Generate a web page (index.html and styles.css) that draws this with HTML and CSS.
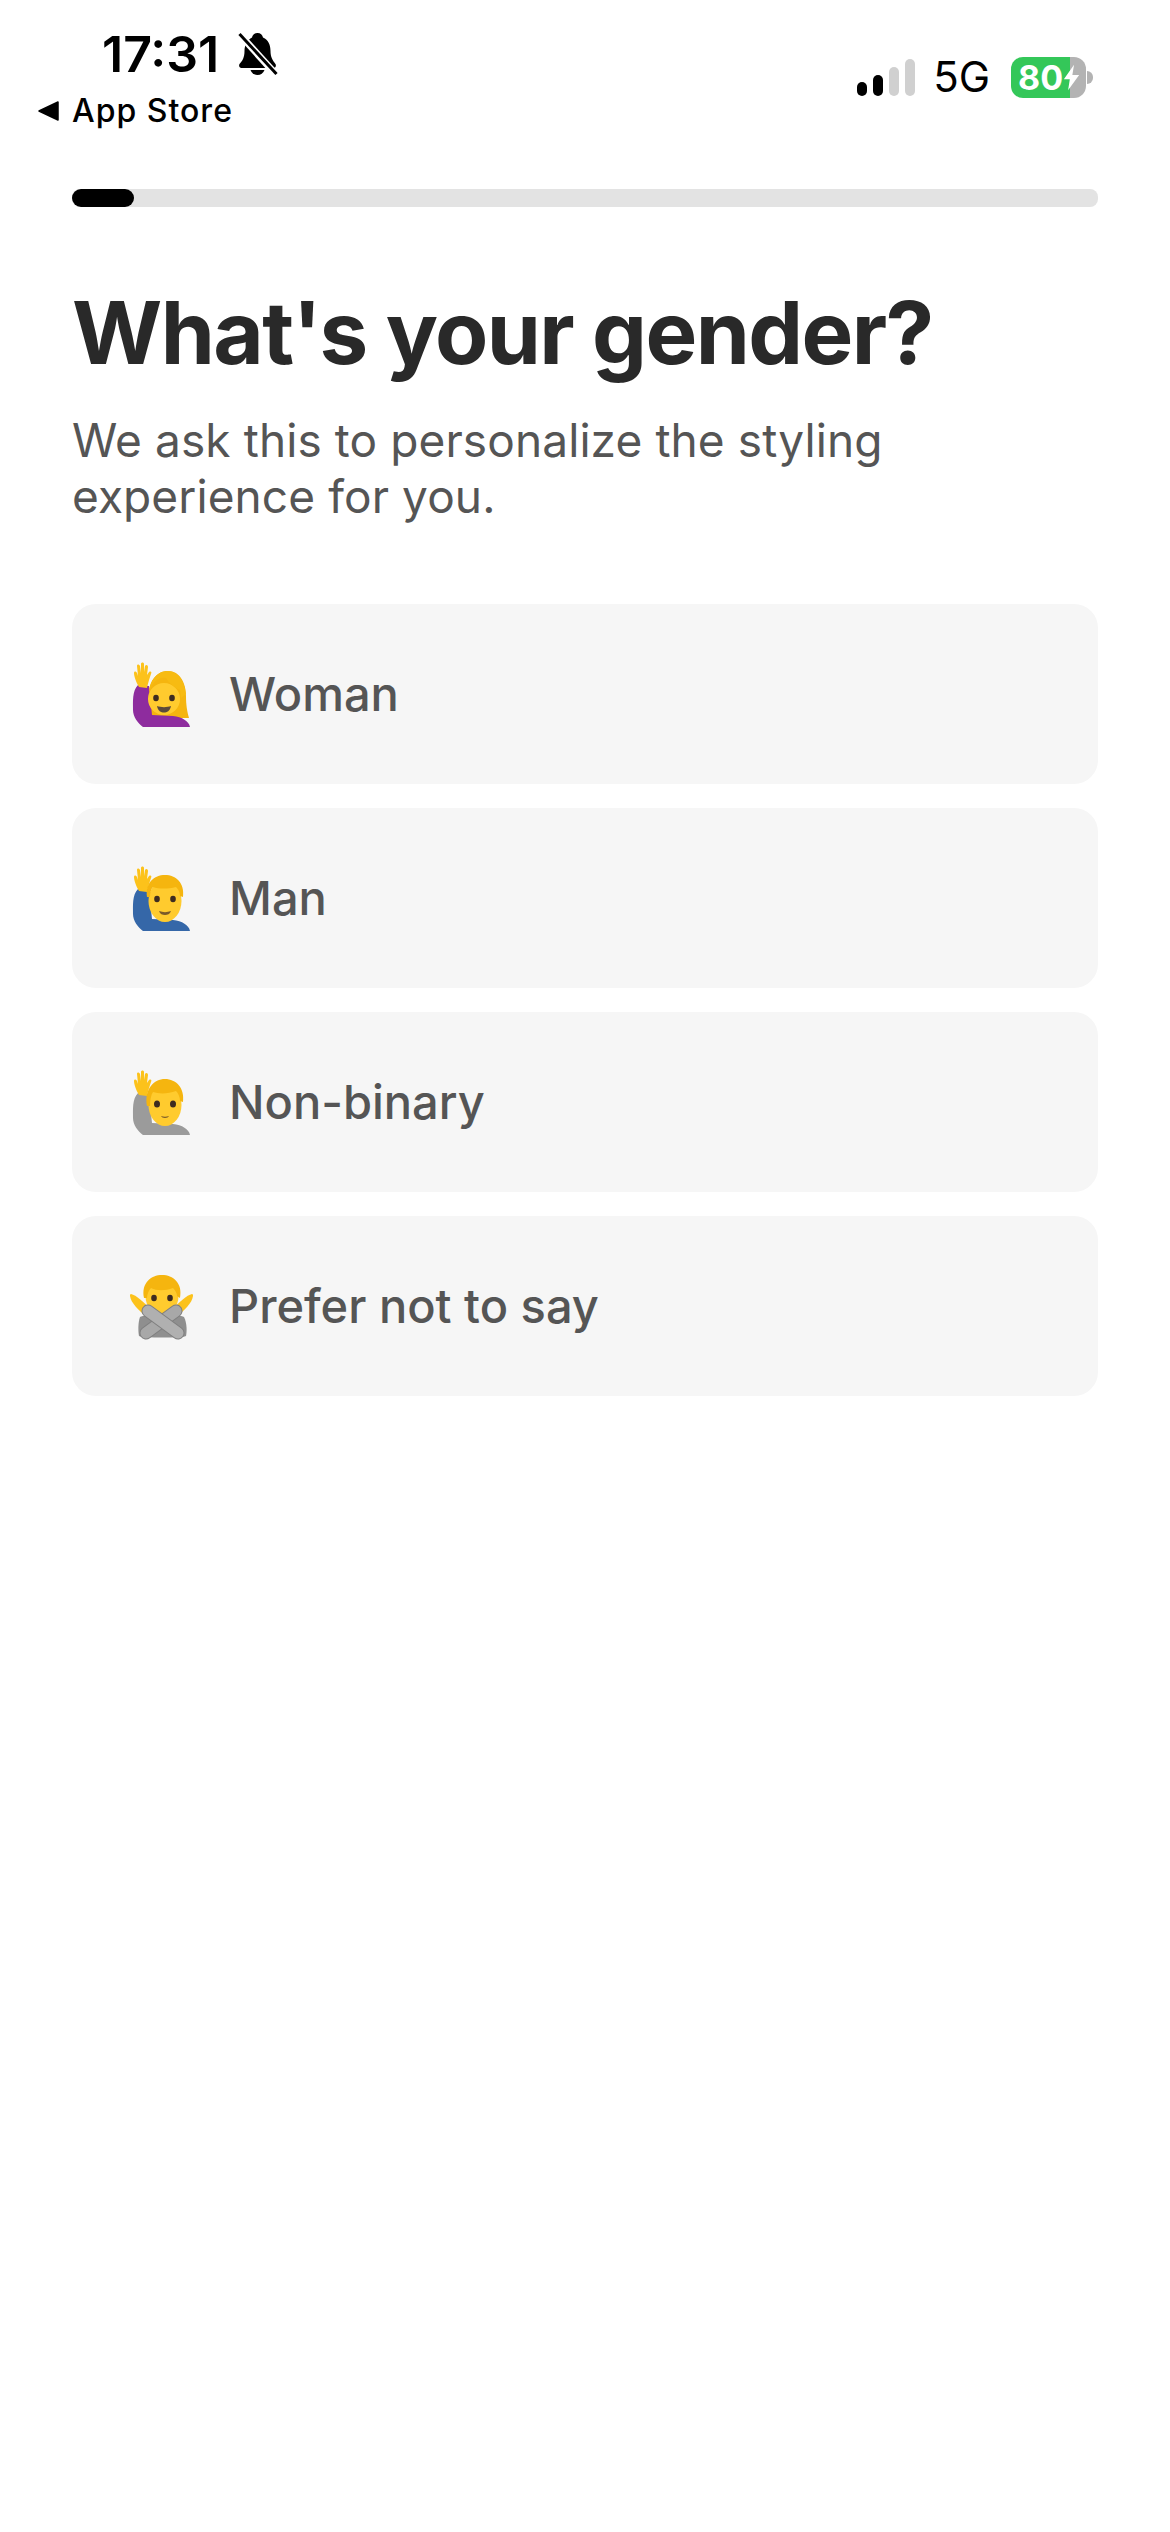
FILE: index.html
```html
<!DOCTYPE html>
<html lang="en">
<head>
  <meta charset="UTF-8">
  <meta name="viewport" content="width=device-width, initial-scale=1.0">
  <title>What's your gender?</title>
  <link rel="stylesheet" href="styles.css">
</head>
<body>

  <!-- Status bar -->
  <header class="status-bar">
    <div class="status-left">
      <div class="clock">
        <span class="time">17:31</span>
        <svg class="bell" viewBox="0 0 40 44">
          <path d="M20 1c3 0 5 2 5.500 4.500C31 8 33 13 33 19c0 6 2 9 5 13 1 2 0 4-2 4H4c-2 0-3-2-2-4 3-3 5-7 5-13 0-6 3-11 7.500-13.500C15 3 17 1 20 1z" fill="#000"/>
          <path d="M13 38h14c-1 3-4 5-7 5s-6-2-7-5z" fill="#000"/>
          <path d="M1 1l37 41" stroke="#fff" stroke-width="7"/>
          <path d="M2 2l37 40" stroke="#000" stroke-width="3"/>
        </svg>
      </div>
      <div class="back-link">
        <svg class="back-arrow" viewBox="0 0 22 20"><path d="M1 10L20 1v18z" fill="#000" stroke="#000" stroke-width="1.500" stroke-linejoin="round"/></svg>
        <span>App Store</span>
      </div>
    </div>
    <div class="status-right">
      <div class="signal">
        <span class="bar bar-1"></span>
        <span class="bar bar-2"></span>
        <span class="bar bar-3"></span>
        <span class="bar bar-4"></span>
      </div>
      <span class="network">5G</span>
      <div class="battery">
        <span class="battery-level">80</span>
        <svg class="bolt" viewBox="0 0 20 30"><path d="M13 0L1 17h7l-2 13L19 12h-8z" fill="#fff"/></svg>
        <span class="battery-tip"></span>
      </div>
    </div>
  </header>

  <main class="content">
    <div class="progress"><div class="progress-fill"></div></div>

    <h1>What's your gender?</h1>
    <p class="subtitle">We ask this to personalize the styling<br>experience for you.</p>

    <!-- Options -->
    <div class="options">
      <div class="option">
        <svg class="emoji" viewBox="0 0 64 68">
          <path d="M19 40C17 21 27 11 38 11c12 0 18 12 18 25 0 9 1 15 3 22H20z" fill="#f5b50f"/>
          <path d="M8 25C2 31 3 42 3 50c0 7 5 13 10 17h47c-1-6-8-10-17-11l-21-1-3-29z" fill="#8e2c9e"/>
          <path d="M9 27c-3-5-5-11-5-14 0-2 2-2 3 0l1 3-1-10c0-2 2-2 3 0l1 7V4c0-2 3-2 3 0v8l1-6c1-2 3-1 3 1l-1 8 2-3c2-1 3 0 2 2-1 3-3 9-4 14z" fill="#fcc21b"/>
          <circle cx="34" cy="39" r="16" fill="#ffcb2e"/>
          <path d="M19 38c0-14 9-22 17-20 4 6 9 10 14 12l1 8 5-4C54 18 46 11 37 11 27 11 18 22 19 38z" fill="#f7bb12"/>
          <ellipse cx="26" cy="38" rx="2.800" ry="3.200" fill="#3e2c20"/>
          <ellipse cx="42" cy="38" rx="2.800" ry="3.200" fill="#3e2c20"/>
          <path d="M27 46c4 1.500 10 1.500 14 0-1 5-4 6.500-7 6.500s-6-1.500-7-6.500z" fill="#5b4a3a"/>
        </svg>
        <span class="option-label">Woman</span>
      </div>

      <div class="option">
        <svg class="emoji" viewBox="0 0 64 68">
          <path d="M8 25C2 31 3 42 3 50c0 7 5 13 10 17h47c-1-6-8-10-17-11l-21-1-3-29z" fill="#3567a8"/>
          <path d="M9 27c-3-5-5-11-5-14 0-2 2-2 3 0l1 3-1-10c0-2 2-2 3 0l1 7V4c0-2 3-2 3 0v8l1-6c1-2 3-1 3 1l-1 8 2-3c2-1 3 0 2 2-1 3-3 9-4 14z" fill="#fcc21b"/>
          <ellipse cx="35" cy="37" rx="16.500" ry="21" fill="#ffcb2e"/>
          <path d="M17 33C15 19 24 11 35 11s20 8 18 22l-3-1c0-4-2-7-4-9-8 2-17 2-23 0-2 2-3 6-3 10z" fill="#f5b50f"/>
          <ellipse cx="27" cy="35" rx="2.800" ry="3.200" fill="#3e2c20"/>
          <ellipse cx="43" cy="35" rx="2.800" ry="3.200" fill="#3e2c20"/>
          <path d="M29 47c4 1.500 8 1.500 12 0-1 3-3.500 4-6 4s-5-1-6-4z" fill="#7a5a2a"/>
        </svg>
        <span class="option-label">Man</span>
      </div>

      <div class="option">
        <svg class="emoji" viewBox="0 0 64 68">
          <path d="M8 25C2 31 3 42 3 50c0 7 5 13 10 17h47c-1-6-8-10-17-11l-21-1-3-29z" fill="#9b9b9b"/>
          <path d="M9 27c-3-5-5-11-5-14 0-2 2-2 3 0l1 3-1-10c0-2 2-2 3 0l1 7V4c0-2 3-2 3 0v8l1-6c1-2 3-1 3 1l-1 8 2-3c2-1 3 0 2 2-1 3-3 9-4 14z" fill="#fcc21b"/>
          <ellipse cx="35" cy="37" rx="16.500" ry="21" fill="#ffcb2e"/>
          <path d="M17 38C14 21 24 11 35 11s20 9 18 23l-3-1c0-4-2-8-4-10-8 3-17 3-23 1-2 3-3 8-3 14z" fill="#f5b50f"/>
          <ellipse cx="27" cy="36" rx="3" ry="3.500" fill="#3e2c20"/>
          <ellipse cx="43" cy="36" rx="3" ry="3.500" fill="#3e2c20"/>
          <path d="M31 48c2.500 1 5.500 1 8 0-1 2.500-7 2.500-8 0z" fill="#7a5a2a"/>
        </svg>
        <span class="option-label">Non-binary</span>
      </div>

      <div class="option">
        <svg class="emoji" viewBox="0 0 64 68">
          <path d="M10 45c4-3 40-3 44 0 3 6 3 14 2 19-1 2-46 2-47 0-1-5-1-13 1-19z" fill="#8f8f8f"/>
          <ellipse cx="32" cy="24" rx="16.500" ry="19" fill="#ffcb2e"/>
          <path d="M14 26C11 11 21 3 32 3s21 8 18 23l-3-2c0-3-2-6-4-8-8 3-16 3-22 0-2 2-4 6-4 10z" fill="#f5b50f"/>
          <ellipse cx="24" cy="26" rx="2.800" ry="3.200" fill="#3e2c20"/>
          <ellipse cx="40" cy="26" rx="2.800" ry="3.200" fill="#3e2c20"/>
          <path d="M1 22c5 1 13 8 20 16l-5 6C9 39 1 31 0 24c0-1 0-2 1-2z" fill="#fcc21b"/>
          <path d="M62 22c-5 1-13 8-20 16l5 6c7-5 15-13 16-20 0-1 0-2-1-2z" fill="#fcc21b"/>
          <path d="M46 39L16 61" stroke="#7f7f7f" stroke-width="13" stroke-linecap="round"/>
          <path d="M46 39L16 61" stroke="#a8a8a8" stroke-width="11" stroke-linecap="round"/>
          <path d="M18 39l30 22" stroke="#7f7f7f" stroke-width="13" stroke-linecap="round"/>
          <path d="M18 39l30 22" stroke="#b0b0b0" stroke-width="11" stroke-linecap="round"/>
        </svg>
        <span class="option-label">Prefer not to say</span>
      </div>
    </div>
  </main>

</body>
</html>
```

FILE: styles.css
```css
/* ====== RESET ====== */
html, body {
  margin: 0;
  padding: 0;
}

body {
  background-color: #fff;
  color: #000;
  font-family: 'Inter', 'Liberation Sans', sans-serif;
  min-height: 100vh;
}

/* ====== STATUS BAR ====== */
.status-bar {
  display: flex;
  justify-content: space-between;
  align-items: flex-start;
  height: 189px;
  padding: 0 84px 0 38px;
  box-sizing: border-box;
}

.status-left {
  padding-top: 24px;
}

.clock {
  display: flex;
  align-items: center;
  gap: 18px;
  height: 60px;
  padding-left: 64px;
}

.time {
  font-size: 50px;
  font-weight: 600;
  line-height: 60px;
}

.bell {
  width: 41px;
  height: 44px;
}

.back-link {
  display: flex;
  align-items: center;
  gap: 12px;
  margin-top: 8px;
  font-size: 32px;
  font-weight: 500;
  line-height: 38px;
  letter-spacing: 1px;
}

.back-arrow {
  width: 22px;
  height: 20px;
}

.status-right {
  display: flex;
  align-items: center;
  padding-top: 56px;
}

.signal {
  display: flex;
  align-items: flex-end;
  gap: 6px;
  height: 37px;
}

.bar {
  width: 10px;
  border-radius: 5px;
  background-color: #000;
}

.bar-1 { height: 14px; }
.bar-2 { height: 21px; }
.bar-3 { height: 29px; background-color: #d0d0d0; }
.bar-4 { height: 37px; background-color: #d0d0d0; }

.network {
  margin-left: 18px;
  font-size: 42px;
  line-height: 42px;
}

/* Battery: green up to 80%, grey for the rest */
.battery {
  position: relative;
  display: flex;
  align-items: center;
  width: 75px;
  height: 41px;
  margin-left: 21px;
  box-sizing: border-box;
  padding-left: 7px;
  border-radius: 12px;
  background: linear-gradient(to right, #34c759 79%, #b3b3b3 79%);
}

.battery-level {
  color: #fff;
  font-size: 34px;
  font-weight: 700;
  line-height: 41px;
}

.bolt {
  width: 17px;
  height: 27px;
}

.battery-tip {
  position: absolute;
  right: -7px;
  top: 14px;
  width: 6px;
  height: 13px;
  border-radius: 0 6px 6px 0;
  background-color: #b3b3b3;
}

/* ====== CONTENT ====== */
.content {
  padding: 0 72px;
}

.progress {
  height: 18px;
  border-radius: 8px;
  background-color: #e3e3e3;
}

.progress-fill {
  width: 62px;
  height: 18px;
  border-radius: 9px;
  background-color: #000;
}

h1 {
  margin: 74px 0 0;
  color: #292929;
  font-size: 87px;
  font-weight: 700;
  line-height: 104px;
  letter-spacing: -1.600px;
}

.subtitle {
  margin: 27px 0 0;
  color: #555;
  font-size: 46px;
  line-height: 56px;
  letter-spacing: 0.100px;
}

.options {
  display: flex;
  flex-direction: column;
  gap: 24px;
  margin-top: 80px;
}

.option {
  display: flex;
  align-items: center;
  gap: 35px;
  height: 180px;
  padding-left: 58px;
  border-radius: 24px;
  background-color: #f6f6f6;
}

.emoji {
  width: 64px;
  height: 68px;
  flex-shrink: 0;
}

.option-label {
  color: #555;
  font-size: 47px;
  font-weight: 500;
  line-height: 58px;
}
```
